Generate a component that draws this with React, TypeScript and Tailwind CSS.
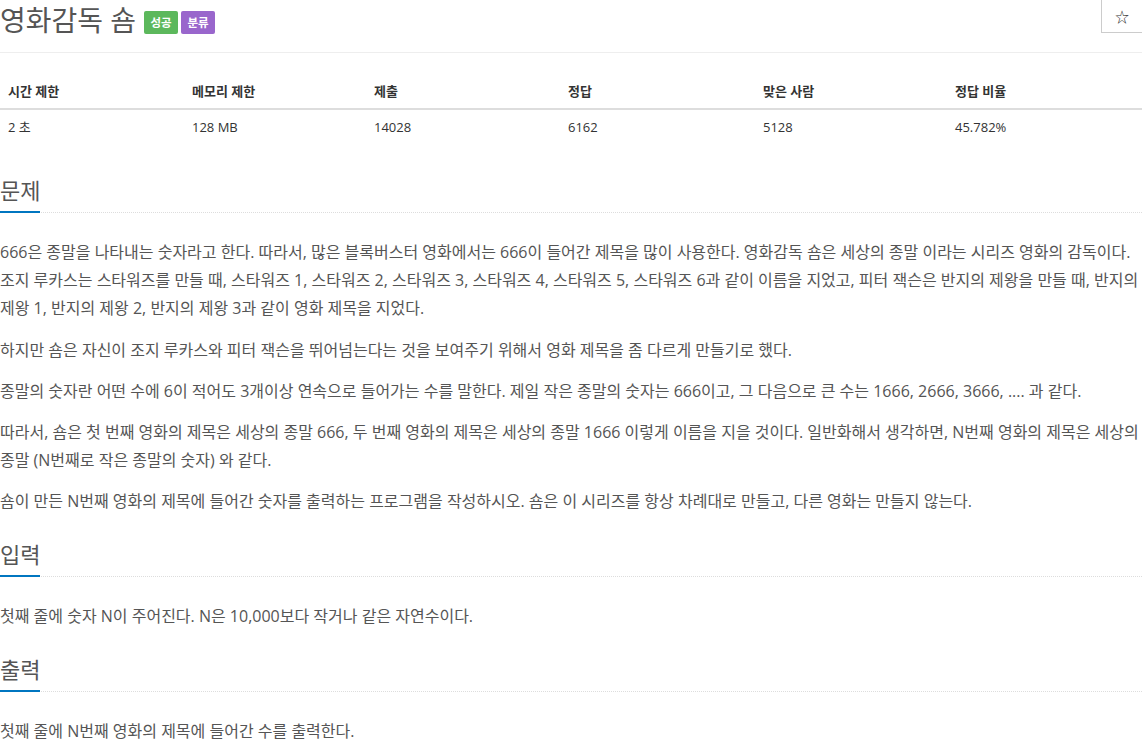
import React from 'react';

const font = { fontFamily: '"Open Sans", "Noto Sans CJK KR", sans-serif' };

const stats = [
    { label: '시간 제한', value: '2 초' },
    { label: '메모리 제한', value: '128 MB' },
    { label: '제출', value: '14028' },
    { label: '정답', value: '6162' },
    { label: '맞은 사람', value: '5128' },
    { label: '정답 비율', value: '45.782%' },
];

const Headline: React.FC<{ title: string }> = ({ title }) => (
    <div className="border-b border-dotted border-[#ddd]">
        <h2 className="inline-block text-[22px] leading-[28px] pb-[7px] -mb-px border-b-2 border-[#0076c0] text-[#555] font-normal">
            {title}
        </h2>
    </div>
);

const Section: React.FC<{ title: string; className?: string; children: React.ReactNode }> = ({ title, className, children }) => (
    <section className={className}>
        <Headline title={title} />
        <div className="mt-[25px] text-[16px] leading-[28px] text-[#555] break-keep">{children}</div>
    </section>
);

export default function App() {
    return (
        <div className="w-[1142px] bg-white text-[#333]" style={font}>
            {/* Header */}
            <div className="flex items-start h-[53px] border-b border-[#eee]">
                <h1 className="text-[28px] leading-[40px] text-[#555] font-normal">영화감독 숌</h1>
                <div className="flex gap-[3px] mt-[11px] ml-[8px]">
                    <span className="flex items-center justify-center w-[34px] h-[23px] rounded-[2px] bg-[#5cb85c] text-white text-[11.5px] font-bold">성공</span>
                    <span className="flex items-center justify-center w-[34px] h-[23px] rounded-[2px] bg-[#9966cc] text-white text-[11.5px] font-bold">분류</span>
                </div>
                <button className="ml-auto w-[41px] h-[33px] flex items-center justify-center border-l border-b border-[#ccc] bg-white text-[#333] text-[14px]">
                    ☆
                </button>
            </div>

            {/* Stats table */}
            <div className="mt-[20px] text-[13px] leading-[20px]">
                <div className="grid grid-cols-[184px_182px_194px_195px_192px_1fr] border-b-2 border-[#ddd]">
                    {stats.map((s) => (
                        <div key={s.label} className="px-2 pt-[8px] pb-[7px] font-bold text-[#333]">{s.label}</div>
                    ))}
                </div>
                <div className="grid grid-cols-[184px_182px_194px_195px_192px_1fr]">
                    {stats.map((s) => (
                        <div key={s.label} className="px-2 pt-[7px] pb-[8px] text-[#333]">{s.value}</div>
                    ))}
                </div>
            </div>

            <Section title="문제" className="mt-[31px]">
                <p className="mb-[14px]">
                    666은 종말을 나타내는 숫자라고 한다. 따라서, 많은 블록버스터 영화에서는 666이 들어간 제목을 많이 사용한다. 영화감독 숌은 세상의 종말 이라는 시리즈 영화의 감독이다. 조지 루카스는 스타워즈를 만들 때, 스타워즈 1, 스타워즈 2, 스타워즈 3, 스타워즈 4, 스타워즈 5, 스타워즈 6과 같이 이름을 지었고, 피터 잭슨은 반지의 제왕을 만들 때, 반지의 제왕 1, 반지의 제왕 2, 반지의 제왕 3과 같이 영화 제목을 지었다.
                </p>
                <p className="mb-[13px]">
                    하지만 숌은 자신이 조지 루카스와 피터 잭슨을 뛰어넘는다는 것을 보여주기 위해서 영화 제목을 좀 다르게 만들기로 했다.
                </p>
                <p className="mb-[13px]">
                    종말의 숫자란 어떤 수에 6이 적어도 3개이상 연속으로 들어가는 수를 말한다. 제일 작은 종말의 숫자는 666이고, 그 다음으로 큰 수는 1666, 2666, 3666, .... 과 같다.
                </p>
                <p className="mb-[13px]">
                    따라서, 숌은 첫 번째 영화의 제목은 세상의 종말 666, 두 번째 영화의 제목은 세상의 종말 1666 이렇게 이름을 지을 것이다. 일반화해서 생각하면, N번째 영화의 제목은 세상의 종말 (N번째로 작은 종말의 숫자) 와 같다.
                </p>
                <p>
                    숌이 만든 N번째 영화의 제목에 들어간 숫자를 출력하는 프로그램을 작성하시오. 숌은 이 시리즈를 항상 차례대로 만들고, 다른 영화는 만들지 않는다.
                </p>
            </Section>

            <Section title="입력" className="mt-[25px]">
                <p>첫째 줄에 숫자 N이 주어진다. N은 10,000보다 작거나 같은 자연수이다.</p>
            </Section>

            <Section title="출력" className="mt-[25px]">
                <p>첫째 줄에 N번째 영화의 제목에 들어간 수를 출력한다.</p>
            </Section>
        </div>
    );
}
